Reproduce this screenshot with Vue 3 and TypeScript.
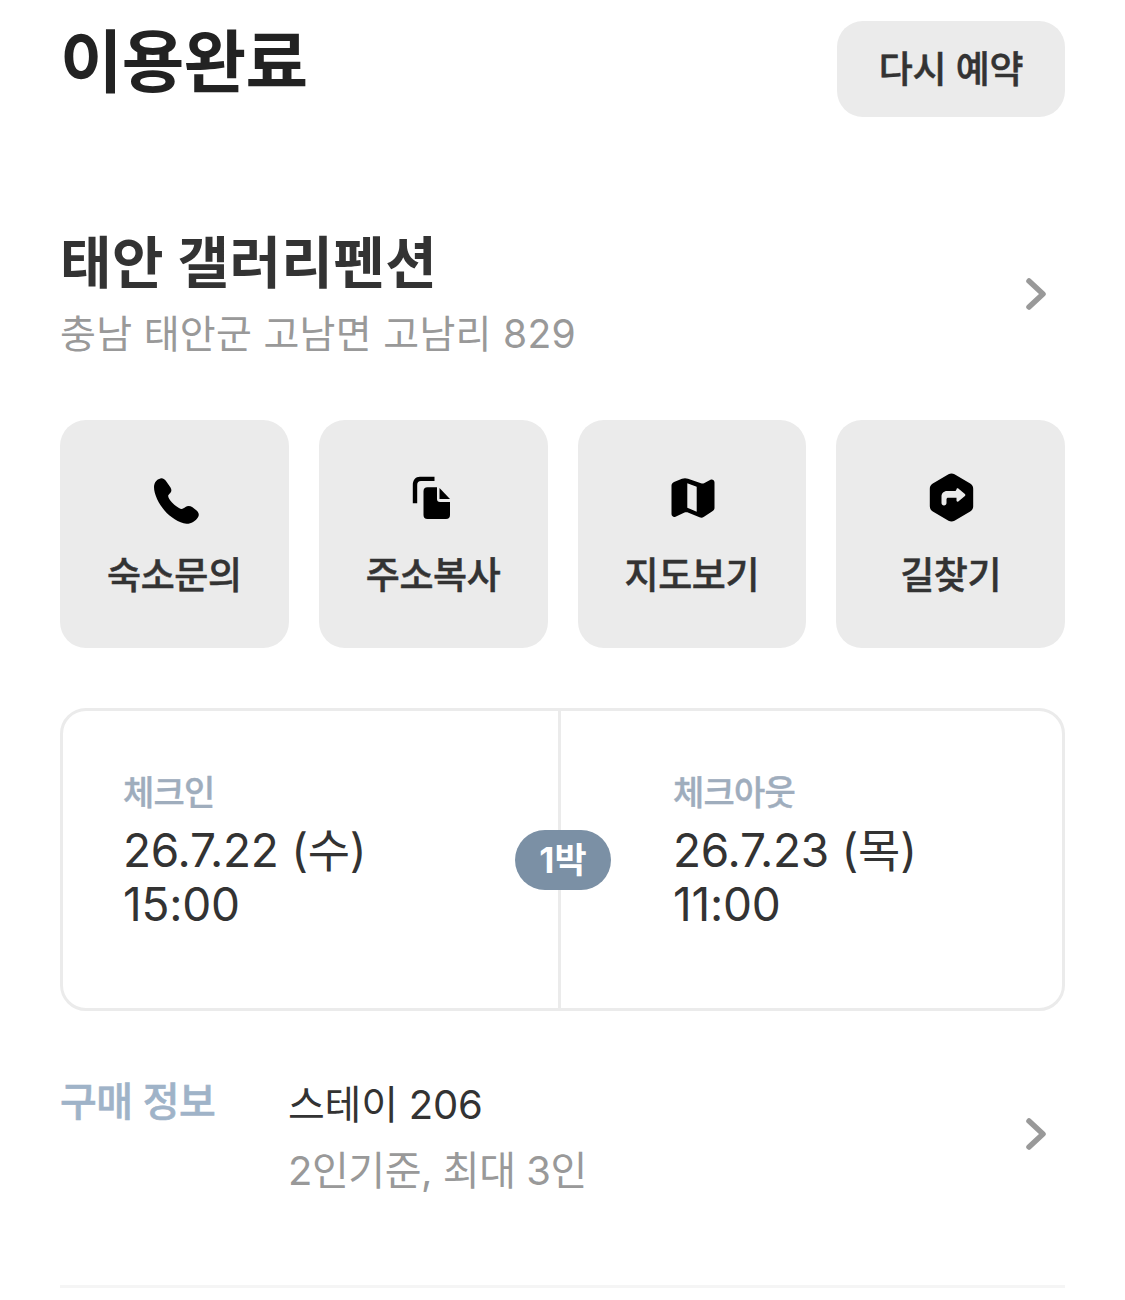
<script setup lang="ts">
const actions = [
  { label: '숙소문의', icon: 'phone' },
  { label: '주소복사', icon: 'copy' },
  { label: '지도보기', icon: 'map' },
  { label: '길찾기', icon: 'route' },
]
</script>

<template>
  <main class="page">
    <header class="top">
      <h1>이용완료</h1>
      <button class="again">다시 예약</button>
    </header>

    <section class="place">
      <div>
        <h2>태안 갤러리펜션</h2>
        <p>충남 태안군 고남면 고남리 829</p>
      </div>
      <svg class="chev chev-place" viewBox="0 0 24 36"><path d="M4 5 L18 18 L4 31" /></svg>
    </section>

    <section class="actions">
      <button v-for="a in actions" :key="a.label" class="action">
        <svg class="ico" viewBox="0 0 56 56">
          <path v-if="a.icon === 'phone'" d="M14.500 8.400C17 8 19 9.500 20.500 11.800L24.500 17.500C26 20 25.500 22 23.500 23.800L22.300 25.300C21.800 26.800 23 29.500 26 32.500C29 35.500 32.500 38.300 35 39C36.800 39.200 38 38 39.500 37C41.500 35.700 44 35.700 46.500 37.300L50.300 40.300C52.800 42.500 53.500 45 52 47.200C49.300 51.200 45 54 40.500 53.800C33 53 24 47 18.500 40.500C13.500 34.500 8 25 8 17C8.200 12.500 10.500 9.200 14.500 8.400Z" />
          <template v-else-if="a.icon === 'copy'">
            <path d="M7.800 33.300V15C7.800 10 10.500 6.700 15 6.700H29.500V11H16C13.500 11 12.200 12.500 12.200 15V33.300Z" />
            <path d="M22.500 17.300H32V29a3 3 0 0 0 3 3H45V45a4 4 0 0 1-4 4H22.500a4 4 0 0 1-4-4V21.300a4 4 0 0 1 4-4Z" />
            <path d="M34.500 18L45 29H34.500Z" />
          </template>
          <path v-else-if="a.icon === 'map'" fill-rule="evenodd" d="M7.500 15.500C7.500 14 8.500 13 10 12L18 8.700C20 8 22 8 24 8.700L37 13.300C38 13.700 39 13.700 40 13.300L46.500 9.800C48.500 9 50.500 10.500 50.500 12.500V38C50.500 39.500 49.500 40.800 48 41.500L40 46.800C38.500 47.800 37 47.900 35.500 47.300L24.500 42.800C23 42.200 21.500 42.200 20 42.800L11.500 46.700C9.500 47.500 7.500 46 7.500 44ZM23.300 13.300V37.700L32.700 41.700V16.700Z" />
          <path v-else fill-rule="evenodd" d="M25.500 4.200c1.900-1.100 4.100-1.100 6 0L47.200 13.500c1.900 1.100 3 3 3 5.200V36.300c0 2.200-1.100 4.100-3 5.200L31.500 50.800c-1.900 1.100-4.100 1.100-6 0L9.800 41.500c-1.900-1.100-3-3-3-5.200V18.700c0-2.200 1.100-4.100 3-5.200ZM33.500 19.500c0-1 1-1.500 1.800-.9l6.600 5.500c.6.500.6 1.300 0 1.800l-6.600 5.500c-.8.600-1.800.1-1.800-.9v-2.700h-8.500c-.8 0-1.500.7-1.500 1.500v3.800c0 1.400-1.100 2.500-2.500 2.500s-2.500-1.100-2.500-2.500v-6.500c0-3.200 2.300-5.500 5.500-5.500h8.500Z" />
        </svg>
        <span>{{ a.label }}</span>
      </button>
    </section>

    <section class="stay">
      <div class="side">
        <div class="label">체크인</div>
        <div class="date">26.7.22 (수)<br />15:00</div>
      </div>
      <div class="side right">
        <div class="label">체크아웃</div>
        <div class="date">26.7.23 (목)<br />11:00</div>
      </div>
      <div class="nights">1박</div>
    </section>

    <section class="purchase">
      <div class="plabel">구매 정보</div>
      <div class="pinfo">
        <div class="room">스테이 206</div>
        <div class="cap">2인기준, 최대 3인</div>
      </div>
      <svg class="chev chev-buy" viewBox="0 0 24 36"><path d="M4 5 L18 18 L4 31" /></svg>
    </section>

    <hr class="rule" />
  </main>
</template>

<style scoped>
.page {
  width: 1125px;
  height: 1300px;
  box-sizing: border-box;
  padding: 21px 60px 0;
  background: #fff;
  overflow: hidden;
  font-family: Inter, "Noto Sans CJK KR", sans-serif;
  color: #333;
}
.top {
  display: flex;
  justify-content: space-between;
  align-items: flex-start;
  height: 96px;
}
h1 {
  margin: 0;
  font-size: 68px;
  line-height: 82px;
  font-weight: 700;
  letter-spacing: -0.75px;
  color: #222;
}
.again {
  width: 228px;
  height: 96px;
  border: 0;
  border-radius: 26px;
  background: #ebebeb;
  font: 500 37px/1 Inter, "Noto Sans CJK KR", sans-serif;
  letter-spacing: -0.3px;
  -webkit-text-stroke: 0.5px #333;
  color: #333;
}
.place {
  display: flex;
  justify-content: space-between;
  align-items: center;
  margin-top: 109px;
  padding-right: 16px;
}
h2 {
  margin: 0;
  font-size: 56px;
  line-height: 74px;
  font-weight: 700;
  letter-spacing: 0.4px;
  color: #333;
}
.place p {
  margin: 9px 0 0;
  font-size: 39px;
  line-height: 50px;
  letter-spacing: 0.3px;
  color: #999;
}
.chev {
  width: 24px;
  height: 36px;
  flex: none;
}
.chev-place {
  margin-top: 3px;
}
.chev-buy {
  margin-bottom: 8px;
}
.chev path {
  fill: none;
  stroke: #999;
  stroke-width: 5.500;
  stroke-linecap: round;
  stroke-linejoin: round;
}
.actions {
  display: grid;
  grid-template-columns: repeat(4, 1fr);
  gap: 30px;
  margin-top: 61px;
}
.action {
  height: 228px;
  border: 0;
  border-radius: 26px;
  background: #ebebeb;
  display: flex;
  flex-direction: column;
  align-items: center;
  padding: 50px 0 0;
  font: 500 37px/48px Inter, "Noto Sans CJK KR", sans-serif;
  letter-spacing: -0.4px;
  -webkit-text-stroke: 0.5px #333;
  color: #333;
}
.ico {
  width: 56px;
  height: 56px;
  margin-bottom: 26px;
  fill: #000;
}
.stay {
  position: relative;
  display: grid;
  grid-template-columns: 495px 1fr;
  height: 303px;
  box-sizing: border-box;
  margin-top: 60px;
  border: 3px solid #ebebeb;
  border-radius: 26px;
}
.side {
  padding: 60px 0 0 60px;
}
.right {
  border-left: 3px solid #ebebeb;
  padding-left: 112px;
}
.label {
  font-size: 34px;
  line-height: 44px;
  font-weight: 500;
  letter-spacing: -0.8px;
  -webkit-text-stroke: 0.4px #9fadbd;
  color: #9fadbd;
}
.date {
  margin-top: 8px;
  font-size: 46px;
  line-height: 54px;
  letter-spacing: -0.25px;
  color: #333;
}
.nights {
  position: absolute;
  left: 452px;
  top: 119px;
  width: 96px;
  height: 60px;
  border-radius: 30px;
  background: #7b90a5;
  color: #fff;
  font-size: 35px;
  font-weight: 700;
  line-height: 60px;
  text-align: center;
  letter-spacing: 0;
}
.purchase {
  display: flex;
  align-items: center;
  margin-top: 60px;
  padding-right: 16px;
}
.plabel {
  width: 228px;
  align-self: flex-start;
  font-size: 40px;
  line-height: 62px;
  font-weight: 500;
  letter-spacing: -0.5px;
  -webkit-text-stroke: 0.6px #9fb3c8;
  color: #9fb3c8;
}
.pinfo {
  flex: 1;
}
.room {
  font-size: 40px;
  line-height: 67px;
  letter-spacing: -0.2px;
  color: #333;
}
.cap {
  font-size: 40px;
  line-height: 66px;
  letter-spacing: -0.45px;
  color: #999;
}
.rule {
  margin: 81px 0 0;
  border: 0;
  height: 3px;
  background: #f5f5f5;
}
</style>
